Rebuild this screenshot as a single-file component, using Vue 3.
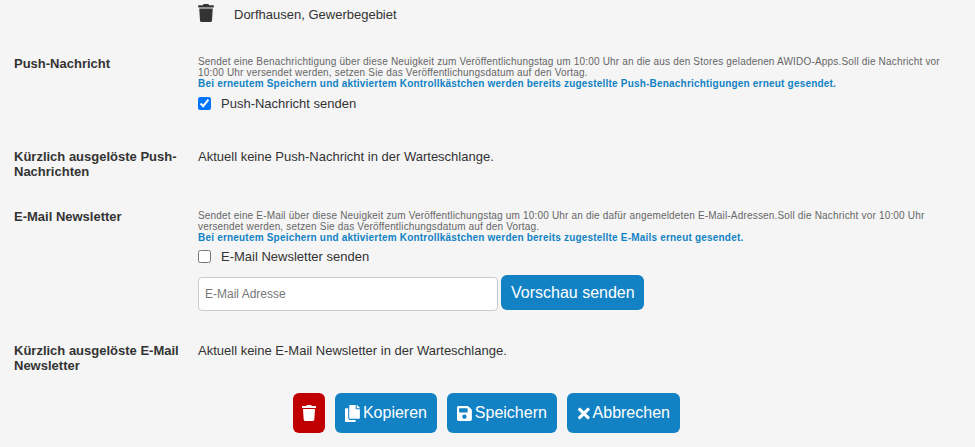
<template>
  <div class="page">
    <!-- Standort -->
    <div class="location">
      <svg class="loc-icon" viewBox="0 0 448 512"><path :d="icons.trash" /></svg>
      <span>Dorfhausen, Gewerbegebiet</span>
    </div>

    <!-- Push -->
    <div class="row push-row">
      <div class="label">Push-Nachricht</div>
      <div class="value">
        <p class="hint">Sendet eine Benachrichtigung über diese Neuigkeit zum Veröffentlichungstag um 10:00 Uhr an die aus den Stores geladenen AWIDO-Apps.Soll die Nachricht vor 10:00 Uhr versendet werden, setzen Sie das Veröffentlichungsdatum auf den Vortag.</p>
        <p class="hint strong">Bei erneutem Speichern und aktiviertem Kontrollkästchen werden bereits zugestellte Push-Benachrichtigungen erneut gesendet.</p>
        <label class="check">
          <input v-model="sendPush" type="checkbox" />
          <span>Push-Nachricht senden</span>
        </label>
      </div>
    </div>

    <div class="row recent-push">
      <div class="label">Kürzlich ausgelöste Push-Nachrichten</div>
      <div class="value">Aktuell keine Push-Nachricht in der Warteschlange.</div>
    </div>

    <!-- Newsletter -->
    <div class="row mail-row">
      <div class="label">E-Mail Newsletter</div>
      <div class="value">
        <p class="hint">Sendet eine E-Mail über diese Neuigkeit zum Veröffentlichungstag um 10:00 Uhr an die dafür angemeldeten E-Mail-Adressen.Soll die Nachricht vor 10:00 Uhr versendet werden, setzen Sie das Veröffentlichungsdatum auf den Vortag.</p>
        <p class="hint strong">Bei erneutem Speichern und aktiviertem Kontrollkästchen werden bereits zugestellte E-Mails erneut gesendet.</p>
        <label class="check">
          <input v-model="sendMail" type="checkbox" />
          <span>E-Mail Newsletter senden</span>
        </label>
        <div class="preview">
          <input class="mail-input" type="text" placeholder="E-Mail Adresse" />
          <button class="btn preview-btn">Vorschau senden</button>
        </div>
      </div>
    </div>

    <div class="row recent-mail">
      <div class="label">Kürzlich ausgelöste E-Mail Newsletter</div>
      <div class="value">Aktuell keine E-Mail Newsletter in der Warteschlange.</div>
    </div>

    <!-- Aktionen -->
    <div class="actions">
      <button class="btn danger">
        <svg class="ico trash" viewBox="0 0 448 512"><path :d="icons.trash" /></svg>
      </button>
      <button v-for="b in buttons" :key="b.text" class="btn">
        <svg class="ico" :viewBox="b.box"><path :d="b.path" /></svg>
        {{ b.text }}
      </button>
    </div>
  </div>
</template>

<script setup>
import { ref } from 'vue'

const sendPush = ref(true)
const sendMail = ref(false)

const icons = {
  trash: 'M432 32H312l-9.4-18.7A24 24 0 0 0 281.1 0H166.8a23.72 23.72 0 0 0-21.4 13.3L136 32H16A16 16 0 0 0 0 48v32a16 16 0 0 0 16 16h416a16 16 0 0 0 16-16V48a16 16 0 0 0-16-16zM53.2 467a48 48 0 0 0 47.9 45h245.8a48 48 0 0 0 47.9-45L416 128H32z',
  copy: 'M320 448v40c0 13.255-10.745 24-24 24H24c-13.255 0-24-10.745-24-24V120c0-13.255 10.745-24 24-24h72v296c0 30.879 25.121 56 56 56h168zm0-344V0H152c-13.255 0-24 10.745-24 24v368c0 13.255 10.745 24 24 24h272c13.255 0 24-10.745 24-24V128H344c-13.2 0-24-10.8-24-24zm120.971-31.029L375.029 7.029A24 24 0 0 0 358.059 0H352v96h96v-6.059a24 24 0 0 0-7.029-16.97z',
  save: 'M433.941 129.941l-83.882-83.882A48 48 0 0 0 316.118 32H48C21.49 32 0 53.49 0 80v352c0 26.51 21.49 48 48 48h352c26.51 0 48-21.49 48-48V163.882a48 48 0 0 0-14.059-33.941zM224 416c-35.346 0-64-28.654-64-64 0-35.346 28.654-64 64-64s64 28.654 64 64c0 35.346-28.654 64-64 64zm96-304.52V212c0 6.627-5.373 12-12 12H76c-6.627 0-12-5.373-12-12V108c0-6.627 5.373-12 12-12h228.52c3.183 0 6.235 1.264 8.485 3.515l3.48 3.48A11.996 11.996 0 0 1 320 111.48z',
  times: 'M242.72 256l100.07-100.07c12.28-12.28 12.28-32.19 0-44.48l-22.24-22.24c-12.28-12.28-32.19-12.28-44.48 0L176 189.28 75.93 89.21c-12.28-12.28-32.19-12.28-44.48 0L9.21 111.45c-12.28 12.28-12.28 32.19 0 44.48L109.28 256 9.21 356.07c-12.28 12.28-12.28 32.19 0 44.48l22.24 22.24c12.28 12.28 32.2 12.28 44.48 0L176 322.72l100.07 100.07c12.28 12.28 32.2 12.28 44.48 0l22.24-22.24c12.28-12.28 12.28-32.19 0-44.48L242.72 256z'
}

const buttons = [
  { text: 'Kopieren', box: '0 0 448 512', path: icons.copy },
  { text: 'Speichern', box: '0 0 448 512', path: icons.save },
  { text: 'Abbrechen', box: '0 0 352 512', path: icons.times }
]
</script>

<style>
html, body { margin: 0; background: #f5f5f5; overflow: hidden; }
</style>

<style scoped>
.page {
  height: 447px;
  box-sizing: border-box;
  padding-top: 4px;
  background: #f5f5f5;
  color: #333;
  font-family: "Liberation Sans", Arial, sans-serif;
  font-size: 13px;
  line-height: 15px;
}

.location {
  display: flex;
  align-items: flex-start;
  height: 22px;
  margin-left: 198px;
  line-height: 22px;
}
.loc-icon { width: 16px; height: 18px; margin-right: 20px; fill: #333; }

.row { display: grid; grid-template-columns: 184px 750px; padding-left: 14px; }
.label { font-weight: bold; }

.push-row { margin-top: 30px; }
.recent-push { margin-top: 36px; }
.mail-row { margin-top: 30px; }
.recent-mail { margin-top: 32px; }

.hint { margin: 0; font-size: 10px; line-height: 11px; color: #666; letter-spacing: 0.18px; }
.strong { color: #1282c4; font-weight: bold; letter-spacing: 0.2px; }
.mail-row .hint:first-child { padding-top: 1px; }

.check { display: flex; align-items: center; height: 20px; margin-top: 4px; }
.mail-row .check { margin-top: 3px; }
.check input { width: 13px; height: 13px; margin: 0 10px 0 0; accent-color: #0075ff; }

.preview { display: flex; align-items: flex-start; gap: 3px; margin-top: 9px; }
.mail-input {
  box-sizing: border-box;
  width: 300px;
  height: 34px;
  margin-top: 2px;
  padding: 0 6px;
  border: 1px solid #ccc;
  border-radius: 4px;
  background: #fff;
  font: 12px "Liberation Sans", Arial, sans-serif;
}
.mail-input::placeholder { color: #777; }

.btn {
  display: inline-flex;
  align-items: center;
  justify-content: center;
  gap: 3px;
  height: 40px;
  padding: 0 10px;
  border: none;
  border-radius: 6px;
  background: #1282c4;
  color: #fff;
  font: 16px "Liberation Sans", Arial, sans-serif;
}
.actions .btn:last-child { padding-left: 11px; }
.preview-btn { height: 35px; padding: 0 9px 0 10px; }
.danger { width: 32px; padding: 0; background: #c00000; }
.ico { height: 17px; width: auto; fill: #fff; }
.ico.trash { height: 16px; }

.actions { display: flex; justify-content: center; gap: 10px; margin-top: 20px; padding-right: 2px; }
</style>
